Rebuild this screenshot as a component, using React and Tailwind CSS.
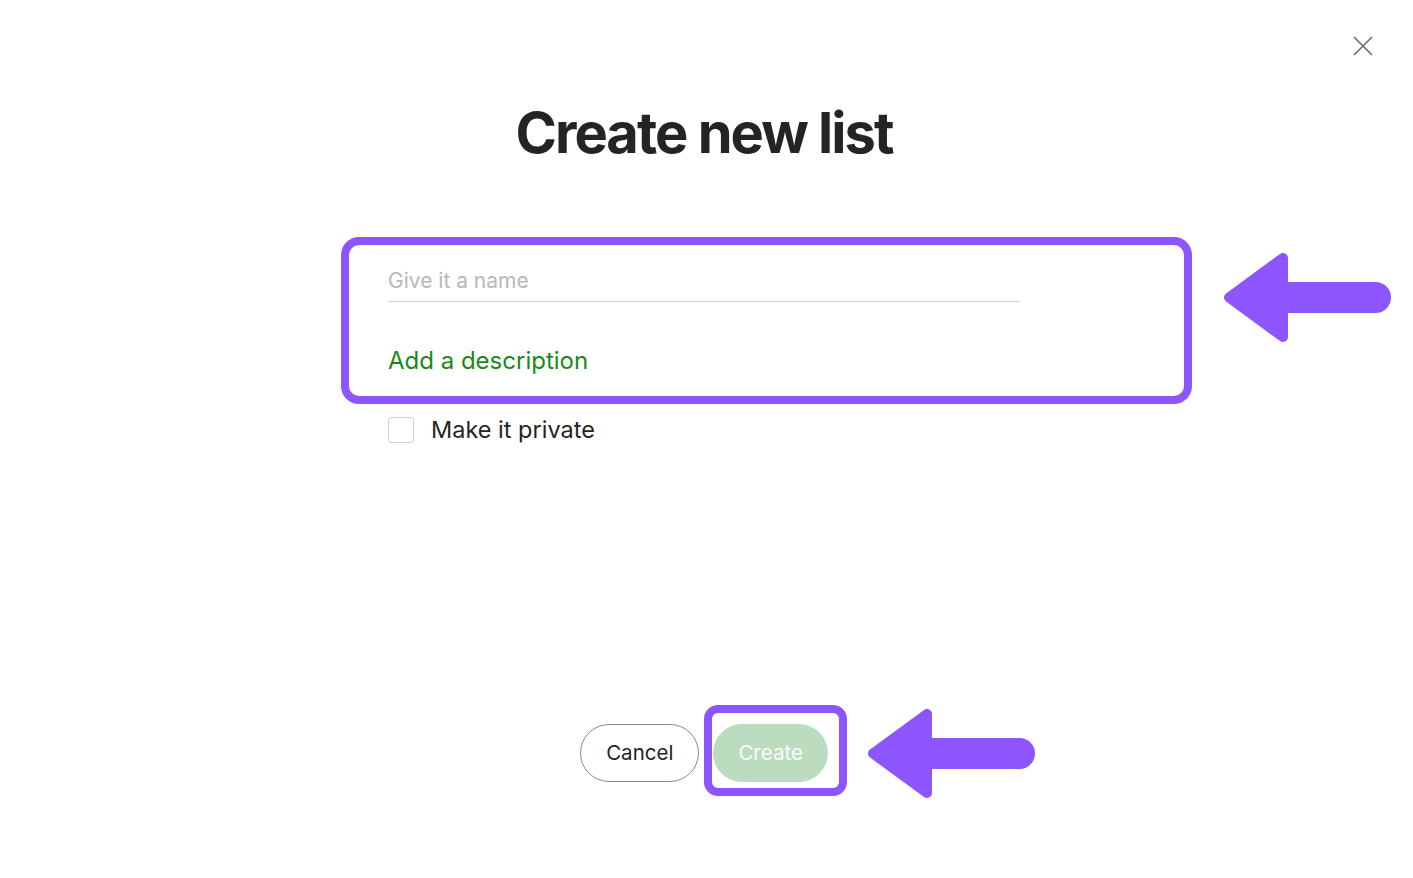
const font = { fontFamily: 'Inter, "Noto Sans", sans-serif' }

function Arrow({ className }) {
    return (
        <svg className={className} width="168" height="89" viewBox="0 0 168 89" fill="none">
            <line x1="62" y1="44.5" x2="152.5" y2="44.5" stroke="#8c55fd" strokeWidth="31" strokeLinecap="round" />
            <polygon points="6,44.5 60,5 60,84" fill="#8c55fd" stroke="#8c55fd" strokeWidth="10" strokeLinejoin="round" />
        </svg>
    )
}

export default function App() {
    return (
        <div className="relative min-h-screen w-full bg-white overflow-hidden" style={font}>
            <button className="absolute left-[1353px] top-[36px] w-5 h-5">
                <svg width="20" height="20" viewBox="0 0 20 20">
                    <path d="M1 1 L19 19 M19 1 L1 19" stroke="#6b6b6b" strokeWidth="1.6" />
                </svg>
            </button>

            <div className="pt-[105px] pr-[5px]">
                <h1 className="text-center text-[56px] leading-none font-bold tracking-[-0.035em] text-[#242424]">
                    Create new list
                </h1>

                <div className="mx-auto w-[632px] mt-[106px]">
                    <input
                        placeholder="Give it a name"
                        className="w-full text-[21px] leading-[28px] pb-[6px] border-b border-[#d4d4d4] text-[#242424] placeholder:text-[#b8b8b8] outline-none"
                    />
                    <button className="block mt-[43px] text-[24px] leading-[32px] text-[#1a8917]">
                        Add a description
                    </button>
                    <label className="flex items-center gap-[17px] mt-[39px] h-[28px]">
                        <span className="w-[26px] h-[26px] rounded-[3px] border border-[#d0d0d0] bg-white" />
                        <span className="text-[23.5px] leading-[28px] text-[#242424]">Make it private</span>
                    </label>
                </div>

                <div className="flex justify-center gap-[14px] mt-[280px]">
                    <button className="h-[58px] px-[25px] rounded-full border border-[#8a8a8a] text-[20.5px] text-[#242424]">
                        Cancel
                    </button>
                    <button className="h-[58px] px-[25px] rounded-full bg-[#bcdcbf] text-[20.5px] text-white/90">
                        Create
                    </button>
                </div>
            </div>

            <div className="absolute left-[341px] top-[237px] w-[851px] h-[167px] border-[8px] border-[#8c55fd] rounded-[18px] pointer-events-none" />
            <div className="absolute left-[704px] top-[705px] w-[143px] h-[91px] border-[8px] border-[#8c55fd] rounded-[14px] pointer-events-none" />
            <Arrow className="absolute left-[1223px] top-[253px]" />
            <Arrow className="absolute left-[867px] top-[709px]" />
        </div>
    )
}
